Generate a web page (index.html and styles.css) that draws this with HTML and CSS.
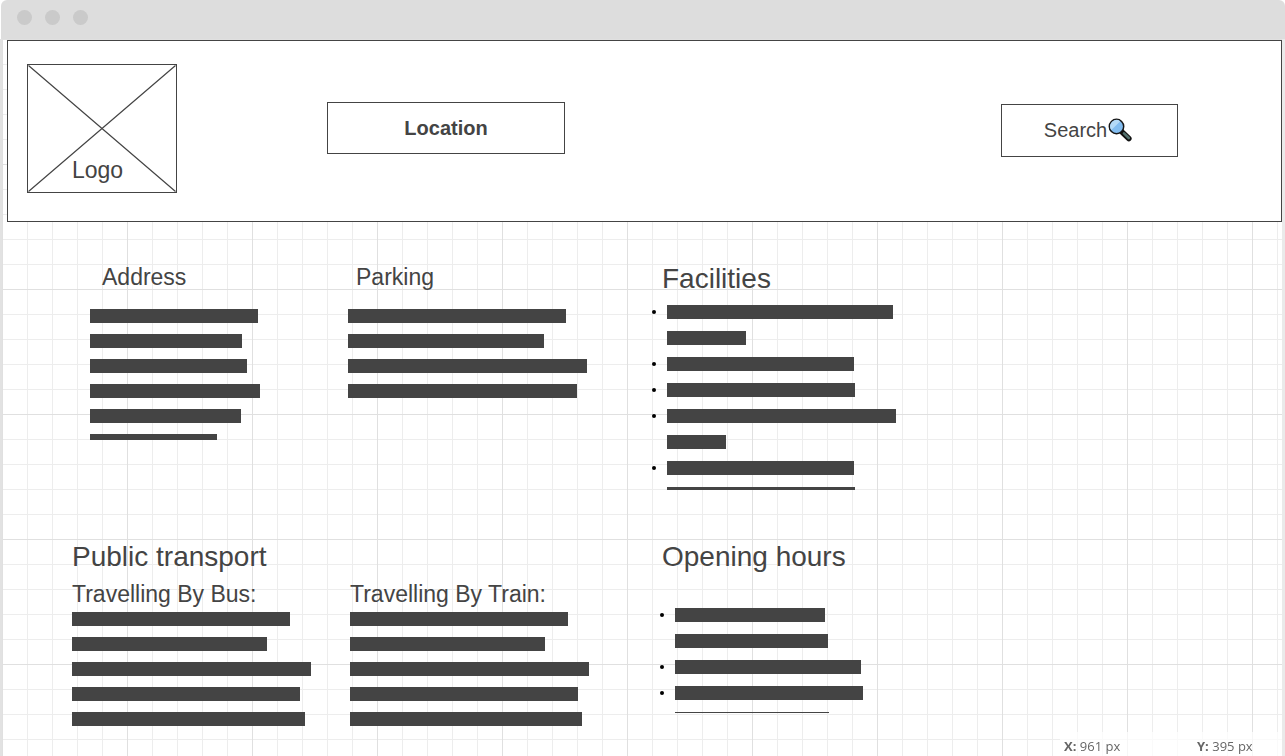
FILE: index.html
```html
<!DOCTYPE html>
<html lang="en">
<head>
<meta charset="utf-8">
<title>Location</title>
<link rel="stylesheet" href="styles.css">
</head>
<body>
<div class="titlebar"><span class="dot"></span><span class="dot"></span><span class="dot"></span></div>
<div class="canvas">
  <header class="header">
    <div class="logo">
      <svg class="logo-cross" viewBox="0 0 150 129" preserveAspectRatio="none" aria-hidden="true"><path d="M0.5 0.5L149.5 128.5M149.5 0.5L0.5 128.5" fill="none" stroke="#444" stroke-width="1.2"/></svg>
      <span class="logo-text">Logo</span>
    </div>
    <button class="box location" type="button">Location</button>
    <button class="box search" type="button">Search<svg class="lens" viewBox="0 0 26 26" aria-hidden="true">
      <path d="M15.5 14.5L21.8 20.5" stroke="#111" stroke-width="5.6" stroke-linecap="round"/>
      <path d="M17 15.4L21.8 20" stroke="#52706d" stroke-width="2.6" stroke-linecap="round"/>
      <circle cx="9.5" cy="8.5" r="7.2" fill="#83bdf0" stroke="#161616" stroke-width="1.5"/>
      <path d="M4.3 12L13.3 3.2A6.4 6.4 0 0 0 4.3 12Z" fill="#b4daf7"/>
    </svg></button>
  </header>
  <main class="content">
    <section class="address">
      <h3>Address</h3>
      <div class="lines">
        <span class="bar" style="width:168px"></span>
        <span class="bar" style="width:152px"></span>
        <span class="bar" style="width:157px"></span>
        <span class="bar" style="width:170px"></span>
        <span class="bar" style="width:151px"></span>
        <span class="bar half" style="width:127px"></span>
      </div>
    </section>
    <section class="parking">
      <h3>Parking</h3>
      <div class="lines">
        <span class="bar" style="width:218px"></span>
        <span class="bar" style="width:196px"></span>
        <span class="bar" style="width:239px"></span>
        <span class="bar" style="width:229px"></span>
      </div>
    </section>
    <section class="facilities">
      <h2>Facilities</h2>
      <ul class="list">
        <li><div class="entry"><span class="bar" style="width:226px"></span><span class="bar" style="width:79px"></span></div></li>
        <li><div class="entry"><span class="bar" style="width:187px"></span></div></li>
        <li><div class="entry"><span class="bar" style="width:188px"></span></div></li>
        <li><div class="entry"><span class="bar" style="width:229px"></span><span class="bar" style="width:59px"></span></div></li>
        <li><div class="entry"><span class="bar" style="width:187px"></span><span class="bar thin" style="width:188px"></span></div></li>
      </ul>
    </section>
    <section class="transport">
      <h2>Public transport</h2>
      <div class="travel">
        <h3>Travelling By Bus:</h3>
        <div class="lines">
          <span class="bar" style="width:218px"></span>
          <span class="bar" style="width:195px"></span>
          <span class="bar" style="width:239px"></span>
          <span class="bar" style="width:228px"></span>
          <span class="bar" style="width:233px"></span>
        </div>
      </div>
      <div class="travel">
        <h3>Travelling By Train:</h3>
        <div class="lines">
          <span class="bar" style="width:218px"></span>
          <span class="bar" style="width:195px"></span>
          <span class="bar" style="width:239px"></span>
          <span class="bar" style="width:228px"></span>
          <span class="bar" style="width:232px"></span>
        </div>
      </div>
    </section>
    <section class="hours">
      <h2>Opening hours</h2>
      <ul class="list">
        <li><div class="entry"><span class="bar" style="width:150px"></span><span class="bar" style="width:153px"></span></div></li>
        <li><div class="entry"><span class="bar" style="width:186px"></span></div></li>
        <li><div class="entry"><span class="bar" style="width:188px"></span><span class="bar hairline" style="width:154px"></span></div></li>
      </ul>
    </section>
  </main>
</div>
<div class="status"><span><b>X:</b> 961 px</span><span><b>Y:</b> 395 px</span></div>
</body>
</html>
```
FILE: styles.css
```css
* { box-sizing: border-box; }

body {
  display: flex;
  flex-direction: column;
  min-height: 100vh;
  margin: 0;
  background: #fff;
  color: #444;
  font-family: "Liberation Sans", Arial, sans-serif;
}

.titlebar {
  display: flex;
  align-items: center;
  gap: 13px;
  height: 39px;
  margin-left: 1px;
  padding: 0 16px 4px;
  border-radius: 6px 6px 0 0;
  background: #ddd;
}

.dot {
  width: 15px;
  height: 15px;
  border-radius: 50%;
  background: #cacaca;
}

.canvas {
  flex: 1;
  border-left: 2px solid #e2e2e2;
  border-right: 3px solid #eaeaea;
  background-color: #fff;
  background-image:
    linear-gradient(#e0e0e0 1px, transparent 1px),
    linear-gradient(90deg, #e0e0e0 1px, transparent 1px),
    linear-gradient(#ededed 1px, transparent 1px),
    linear-gradient(90deg, #ededed 1px, transparent 1px);
  background-size: 125px 125px, 125px 125px, 25px 25px, 25px 25px;
}

.header {
  display: flex;
  align-items: flex-start;
  margin: 1px 0 0 5px;
  padding: 23px 103px 28px 19px;
  border: 1px solid #444;
  background: #fff;
}

.logo {
  display: grid;
  width: 150px;
  height: 129px;
  border: 1px solid #444;
}

.logo-cross,
.logo-text { grid-area: 1 / 1; }

.logo-cross {
  width: 100%;
  height: 100%;
}

.logo-text {
  align-self: end;
  padding: 0 0 8px 44px;
  font-size: 23px;
  line-height: 28px;
}

.box {
  display: flex;
  align-items: center;
  justify-content: center;
  padding: 0;
  border: 1px solid #444;
  background: #fff;
  color: #444;
  font-family: inherit;
  font-size: 20px;
}

.location {
  width: 238px;
  height: 52px;
  margin: 38px 0 0 150px;
  font-weight: 700;
}

.search {
  width: 177px;
  height: 53px;
  margin: 40px 0 0 auto;
  padding-right: 2px;
}

.lens {
  width: 26px;
  height: 26px;
}

.content {
  display: grid;
  grid-template-columns: 278fr 312fr 622fr;
  row-gap: 50px;
  padding: 41px 0 28px 68px;
}

h2,
h3 {
  margin: 0;
  font-weight: 400;
}

h2 {
  padding-left: 2px;
  font-size: 28px;
  line-height: 32px;
}

h3 {
  font-size: 23px;
  line-height: 28px;
}

.lines {
  display: grid;
  gap: 11px;
}

.bar {
  display: block;
  height: 14px;
  background: #444;
}

.half { height: 6px; }
.thin { height: 3px; }
.hairline { height: 1px; }

.address { padding-left: 20px; }
.address h3 { padding-left: 12px; }
.parking h3 { padding-left: 8px; }
.address .lines,
.parking .lines { margin-top: 18px; }

.list {
  display: grid;
  gap: 12px;
  margin: 0;
  padding: 0;
  list-style: none;
}

.list li {
  display: flex;
  gap: 11px;
}

.list li::before {
  content: "";
  width: 4px;
  height: 4px;
  margin-top: 5px;
  border-radius: 50%;
  background: #000;
}

.entry {
  display: grid;
  gap: 12px;
}

.facilities .list { margin: 10px 0 0 -8px; }
.transport,
.hours { padding-top: 1px; }
.hours .list { margin-top: 35px; }

.transport {
  display: grid;
  grid-column: span 2;
  grid-template-columns: subgrid;
  align-content: start;
  row-gap: 7px;
}

.transport h2 { grid-column: 1 / -1; }
.travel { padding-left: 2px; }
.travel .lines { padding-top: 4px; }

.status {
  position: fixed;
  right: 3px;
  bottom: 0;
  display: grid;
  grid-template-columns: 133px auto;
  width: 222px;
  height: 24px;
  padding: 4px 4px 0;
  background: rgba(255, 255, 255, 0.7);
  color: #666;
  font: 13px/20px "Open Sans", "Noto Sans", sans-serif;
}
```
